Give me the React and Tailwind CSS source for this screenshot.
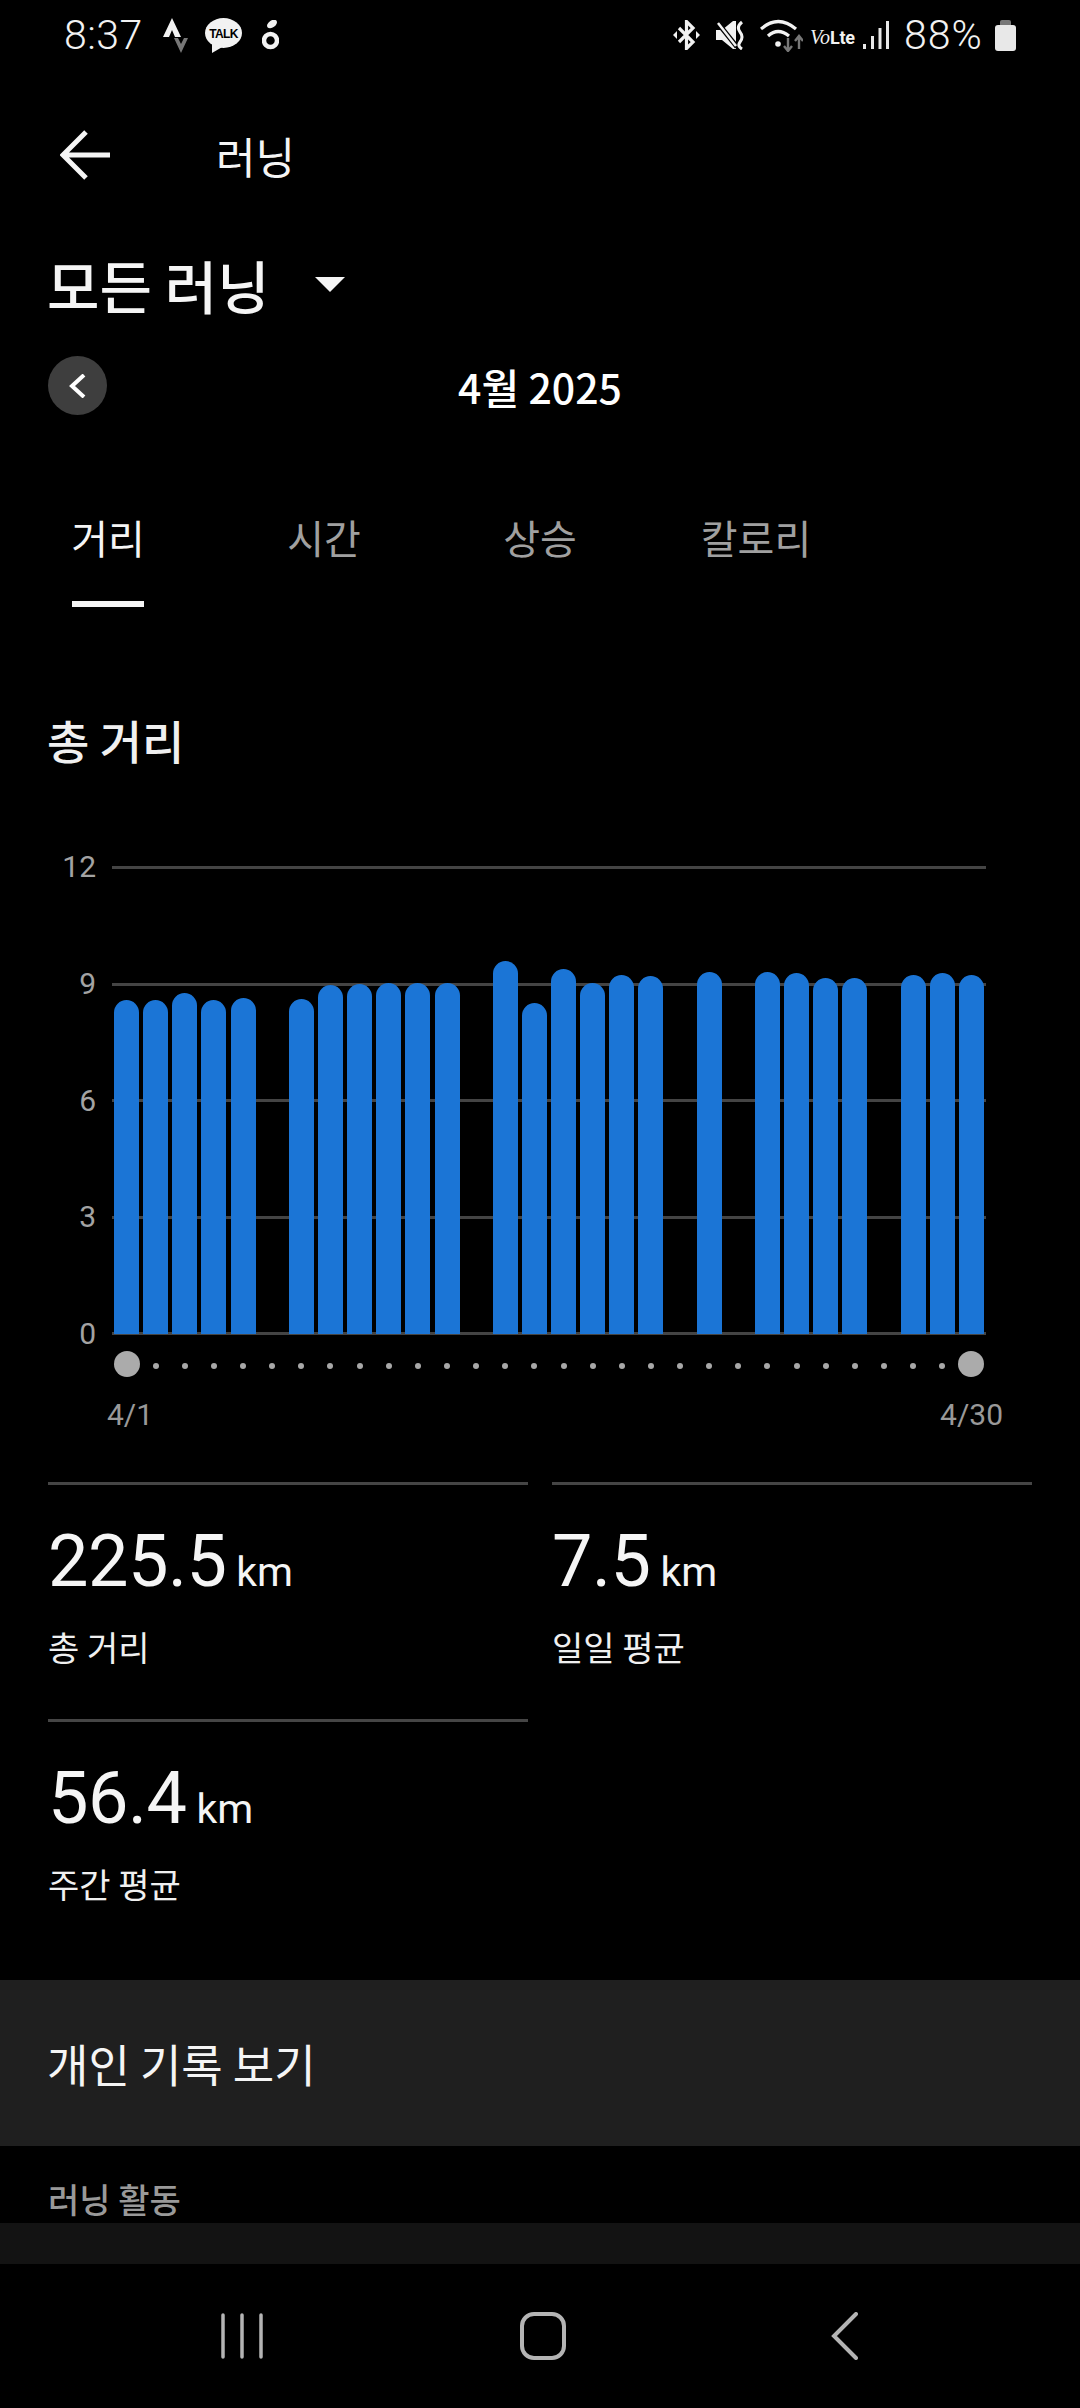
import React from "react";

const KR = "font-['Noto_Sans_CJK_KR',sans-serif]";
const NUM = "font-['Roboto',sans-serif]";

// top edge (px in page) of every day's bar, null = no run that day
const BAR_TOPS = [
  1000, 1000, 993, 1000, 998, null, 999, 985, 984, 983, 983, 983, null, 961, 1003,
  969, 983, 975, 976, null, 972, null, 972, 973, 978, 978, null, 975, 973, 975,
];
const AXIS_BOTTOM = 1334;

const StatusBar = () => {
  return (
    <div className="h-[68px] flex items-center justify-between pl-[64px] pr-[64px] pt-[2px] text-[#f2f2f2]">
      <div className="flex items-center">
        <span className={`${NUM} text-[41px] font-light leading-none tracking-[0.5px] w-[78px]`}>8:37</span>
        <svg className="ml-[21px]" width="25" height="35" viewBox="0 0 25 35">
          <polygon points="9,0 0,19 6,19 9,12 12,19 18,19" fill="#f2f2f2" />
          <polygon points="11,20 15,20 18,26 21,20 25,20 18,35" fill="#777" />
        </svg>
        <svg className="ml-[17px]" width="37" height="35" viewBox="0 0 37 35">
          <ellipse cx="18.5" cy="15" rx="18.5" ry="15" fill="#f2f2f2" />
          <polygon points="7,25 7,35 19,28" fill="#f2f2f2" />
          <text x="18.5" y="20" textAnchor="middle" fontSize="12" fontWeight="700" fontFamily="Liberation Sans, sans-serif" letterSpacing="-0.6" fill="#000">TALK</text>
        </svg>
        <svg className="ml-[20px]" width="17" height="30" viewBox="0 0 17 30">
          <ellipse cx="10" cy="4" rx="5.5" ry="3.5" transform="rotate(-35 10 4)" fill="#f2f2f2" />
          <circle cx="8.5" cy="20.5" r="6.5" fill="none" stroke="#f2f2f2" strokeWidth="4.5" />
        </svg>
      </div>
      <div className="flex items-center">
        <svg width="27" height="30" viewBox="0 0 27 30" fill="none" stroke="#f2f2f2" strokeWidth="3.2">
          <polyline points="6,8 20,22 13.5,28.5 13.5,1.5 20,8 6,22" />
          <polygon points="0,15 4,11 4,19" fill="#f2f2f2" stroke="none" />
          <polygon points="27,15 23,11 23,19" fill="#f2f2f2" stroke="none" />
        </svg>
        <svg className="ml-[16px]" width="29" height="30" viewBox="0 0 29 30" fill="none">
          <polygon points="0,10 6,10 17,1 20,1 20,29 17,29 6,20 0,20" fill="#f2f2f2" />
          <line x1="1" y1="2" x2="21" y2="27" stroke="#000" strokeWidth="5" />
          <line x1="2" y1="3" x2="20" y2="26" stroke="#f2f2f2" strokeWidth="2.5" />
          <path d="M26 2 Q20 7 24 12 Q28 17 24 22 Q21 26 26 29" stroke="#f2f2f2" strokeWidth="3" />
        </svg>
        <svg className="ml-[15px]" width="43" height="33" viewBox="0 0 43 33" fill="none">
          <path d="M1 10 Q18 -5 36 10" stroke="#f2f2f2" strokeWidth="3.2" />
          <path d="M8 17 Q18 8 29 17" stroke="#f2f2f2" strokeWidth="3.2" />
          <circle cx="18" cy="25" r="2.8" fill="#f2f2f2" />
          <path d="M28 19 V31 M24 27 L28 32 L32 27" stroke="#777" strokeWidth="2.4" />
          <path d="M39 30 V18 M35 22 L39 17 L43 22" stroke="#777" strokeWidth="2.4" />
        </svg>
        <div className="ml-[7px] w-[42px] flex items-baseline leading-none mt-[4px]">
          <span className="font-['Liberation_Serif',serif] italic text-[20px]">Vo</span>
          <span className={`${NUM} font-bold text-[18px] tracking-[-0.3px]`}>Lte</span>
        </div>
        <svg className="ml-[11px]" width="26" height="28" viewBox="0 0 26 28" fill="#e8e8e8">
          <rect x="0" y="23" width="3" height="5" />
          <rect x="8" y="15" width="3" height="13" />
          <rect x="15.5" y="7" width="3" height="21" />
          <rect x="23" y="0" width="3" height="28" />
        </svg>
        <span className={`${NUM} ml-[15px] w-[83px] text-[41px] font-light leading-none tracking-[1px]`}>88%</span>
        <svg className="ml-[8px]" width="21" height="31" viewBox="0 0 21 31">
          <rect x="5" y="0" width="11" height="8" rx="2" fill="#777" />
          <rect x="0" y="5" width="21" height="26" rx="3" fill="#e8e8e8" />
        </svg>
      </div>
    </div>
  );
};

const Chart = () => {
  const axis = [12, 9, 6, 3, 0];
  return (
    <div className="mt-[97px]">
      {/* Plot */}
      <div className="flex">
        <div className={`${NUM} w-[96px] h-[469px] flex flex-col justify-between text-[30px] text-[#a3a3a3]`}>
          {axis.map((n) => (
            <div key={n} className="h-[2px] flex items-center justify-end leading-none">{n}</div>
          ))}
        </div>
        <div className="relative ml-[16px] w-[874px] h-[469px] flex flex-col justify-between">
          {axis.map((n) => (
            <div key={n} className="h-[3px] bg-[#444444]" />
          ))}
          <div className="absolute inset-x-0 bottom-[1px] top-0 grid grid-cols-[repeat(30,minmax(0,1fr))]">
            {BAR_TOPS.map((top, i) => (
              <div key={i} className="flex items-end justify-center">
                {top && (
                  <div
                    className="w-[25px] rounded-t-[12.5px] bg-[#1b75d6]"
                    style={{ height: AXIS_BOTTOM - top }}
                  />
                )}
              </div>
            ))}
          </div>
        </div>
      </div>

      {/* Day dots */}
      <div className="mt-[16px] ml-[112px] w-[874px] h-[26px] grid grid-cols-[repeat(30,minmax(0,1fr))]">
        {BAR_TOPS.map((_, i) => (
          <div key={i} className="flex items-center justify-center">
            {i === 0 || i === 29 ? (
              <div className="w-[26px] h-[26px] rounded-full bg-[#ababab]" />
            ) : (
              <div className="w-[6px] h-[6px] mt-[4px] rounded-full bg-[#a8a8a8]" />
            )}
          </div>
        ))}
      </div>

      <div className={`${NUM} mt-[23px] h-[30px] pl-[107px] pr-[77px] flex justify-between items-center text-[30px] leading-none text-[#999999]`}>
        <span>4/1</span>
        <span>4/30</span>
      </div>
    </div>
  );
};

const Stat = ({ value, label }) => {
  return (
    <div className="h-[237px] border-t-[3px] border-[#454545]">
      <div className={`${NUM} mt-[41px] flex items-baseline text-[#f5f5f5] leading-none`}>
        <span className="text-[72px] tracking-[-0.5px]">{value}</span>
        <span className="ml-[10px] text-[41px]">km</span>
      </div>
      <p className={`${KR} mt-[32px] text-[34px] leading-none text-[#f0f0f0]`}>{label}</p>
    </div>
  );
};

const App = () => {
  const tabs = ["거리", "시간", "상승", "칼로리"];
  return (
    <div className={`${KR} w-[1080px] h-[2408px] bg-black overflow-hidden flex flex-col`}>
      <StatusBar />

      {/* Header */}
      <div className="h-[174px] flex items-center pl-[60px]">
        <svg width="50" height="50" viewBox="0 0 50 50" fill="none" stroke="#f5f5f5" strokeWidth="5">
          <path d="M50 25 H4 M26 2 L3 25 L26 48" />
        </svg>
        <h1 className="ml-[106px] text-[43px] leading-none text-[#f5f5f5]">러닝</h1>
      </div>

      {/* Filter */}
      <div className="h-[88px] flex items-center pl-[47px]">
        <span className="text-[57px] font-medium leading-none text-[#f5f5f5] mt-[-3px]">모든 러닝</span>
        <svg className="ml-[45px] mt-[-3px]" width="30" height="15" viewBox="0 0 30 15">
          <polygon points="0,0 30,0 15,15" fill="#f5f5f5" />
        </svg>
      </div>

      {/* Month */}
      <div className="relative h-[86px] mt-[-1px] pt-[28px] flex items-center justify-center">
        <button className="absolute left-[48px] top-[27px] w-[59px] h-[59px] rounded-full bg-[#3e3e3e] flex items-center justify-center">
          <svg width="17" height="24" viewBox="0 0 17 24" fill="none" stroke="#fff" strokeWidth="4">
            <path d="M15 1 L3 12 L15 23" />
          </svg>
        </button>
        <span className="text-[41px] font-medium leading-none text-white">4월 2025</span>
      </div>

      {/* Tabs */}
      <div className="mt-[92px] grid grid-cols-5">
        {tabs.map((tab, i) => (
          <div key={tab} className="flex flex-col items-center">
            <span className={`h-[60px] flex items-center text-[40px] leading-none ${i === 0 ? "text-[#f5f5f5]" : "text-[#a0a0a0]"}`}>{tab}</span>
            <div className={`mt-[34px] w-[72px] h-[6px] ${i === 0 ? "bg-[#f5f5f5]" : "bg-transparent"}`} />
          </div>
        ))}
      </div>

      <h2 className="mt-[102px] h-[60px] pl-[47px] flex items-center text-[46px] font-medium leading-none text-[#f0f0f0]">총 거리</h2>

      <Chart />

      {/* Stats */}
      <div className="mt-[52px] px-[48px] grid grid-cols-2 gap-x-[24px]">
        <Stat value="225.5" label="총 거리" />
        <Stat value="7.5" label="일일 평균" />
        <Stat value="56.4" label="주간 평균" />
      </div>

      <div className="mt-[24px] h-[166px] bg-[#1f1f1f] flex items-center pl-[47px]">
        <span className="text-[45px] leading-none text-[#f5f5f5]">개인 기록 보기</span>
      </div>

      <div className="h-[77px] pl-[48px] flex items-end pb-[7px]">
        <span className="text-[34px] font-medium leading-none text-[#999999]">러닝 활동</span>
      </div>
      <div className="h-[41px] bg-[#131313]" />

      {/* Nav bar */}
      <div className="h-[144px] pl-[90px] flex items-center">
        <div className="w-[303px] flex justify-center">
          <svg width="42" height="46" viewBox="0 0 42 46" stroke="#b4b4b4" strokeWidth="3.5" strokeLinecap="round">
            <path d="M2 2 V44 M21 2 V44 M40 2 V44" />
          </svg>
        </div>
        <div className="w-[300px] flex justify-center">
          <div className="w-[46px] h-[48px] rounded-[14px] border-[4px] border-[#b4b4b4]" />
        </div>
        <div className="w-[303px] flex justify-center">
          <svg width="27" height="48" viewBox="0 0 27 48" fill="none" stroke="#b4b4b4" strokeWidth="4" strokeLinecap="round">
            <path d="M25 2 L3 24 L25 46" />
          </svg>
        </div>
      </div>
    </div>
  );
};

export default App;
